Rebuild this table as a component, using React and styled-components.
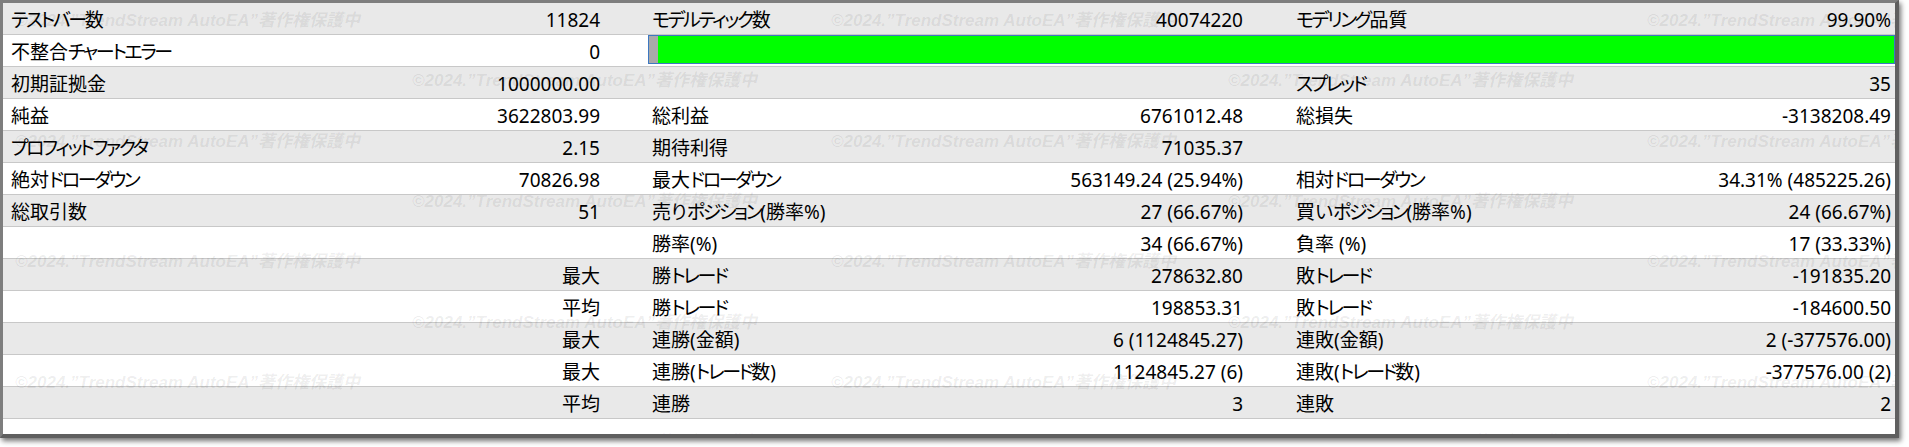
import React from "react";
import styled, { createGlobalStyle } from "styled-components";

const GlobalStyle = createGlobalStyle`
  html, body {
    margin: 0;
    padding: 0;
    background: #ffffff;
  }
  body {
    width: 1909px;
    height: 447px;
    overflow: hidden;
  }
`;

const rows = [
  [["テストバー数", "11824"], ["モデルティック数", "40074220"], ["モデリング品質", "99.90%"]],
  [["不整合チャートエラー", "0"], "bar"],
  [["初期証拠金", "1000000.00"], ["", ""], ["スプレッド", "35"]],
  [["純益", "3622803.99"], ["総利益", "6761012.48"], ["総損失", "-3138208.49"]],
  [["プロフィットファクタ", "2.15"], ["期待利得", "71035.37"], ["", ""]],
  [["絶対ドローダウン", "70826.98"], ["最大ドローダウン", "563149.24 (25.94%)"], ["相対ドローダウン", "34.31% (485225.26)"]],
  [["総取引数", "51"], ["売りポジション(勝率%)", "27 (66.67%)"], ["買いポジション(勝率%)", "24 (66.67%)"]],
  [["", ""], ["勝率(%)", "34 (66.67%)"], ["負率 (%)", "17 (33.33%)"]],
  [["", "最大"], ["勝トレード", "278632.80"], ["敗トレード", "-191835.20"]],
  [["", "平均"], ["勝トレード", "198853.31"], ["敗トレード", "-184600.50"]],
  [["", "最大"], ["連勝(金額)", "6 (1124845.27)"], ["連敗(金額)", "2 (-377576.00)"]],
  [["", "最大"], ["連勝(トレード数)", "1124845.27 (6)"], ["連敗(トレード数)", "-377576.00 (2)"]],
  [["", "平均"], ["連勝", "3"], ["連敗", "2"]],
];

// padding of each label/value group: [left, right]
const groupPads = [
  [8, 48],
  [4, 49],
  [4, 4],
];

const WATERMARK = "©2024.”TrendStream AutoEA”著作権保護中";

const Window = styled.div`
  position: relative;
  box-sizing: border-box;
  width: 1899px;
  height: 438px;
  border-style: solid;
  border-color: #7e7e7e #5f5f5f #5f5f5f #7e7e7e;
  border-width: 3px 4px 4px 3px;
  box-shadow: 2px 3px 5px rgba(0, 0, 0, 0.55);
  background: #ffffff;
  overflow: hidden;
  display: flex;
  flex-direction: column;
  font-family: "Noto Sans", "Noto Sans CJK JP", sans-serif;
  font-feature-settings: "palt";
  font-size: 19px;
  color: #000000;
`;

const Row = styled.div`
  box-sizing: border-box;
  height: 32px;
  display: grid;
  grid-template-columns: 645px 644px 1fr;
  background: ${(p) => (p.$shaded ? "#e9e9e9" : "#ffffff")};
  border-bottom: 1px solid #c8c8c8;
`;

const Group = styled.div`
  display: flex;
  align-items: center;
  justify-content: space-between;
  padding: 3px ${(p) => p.$pr}px 0 ${(p) => p.$pl}px;
  white-space: nowrap;
  line-height: 1;
`;

const Label = styled.span``;

// katakana in the source UI font is narrower than in Noto CJK
const Kana = styled.span`
  letter-spacing: -2.4px;
`;

const Value = styled.span`
  text-align: right;
`;

const Bar = styled.div`
  grid-column: 2 / 4;
  align-self: start;
  box-sizing: border-box;
  height: 29px;
  display: flex;
  border: 1px solid #3d78c2;
  background: #00ff00;
`;

const BarLead = styled.div`
  width: 9px;
  background: #a9a9a9;
`;

const Filler = styled.div`
  flex: 1;
  background: #ffffff;
`;

const MarkLayer = styled.div`
  position: absolute;
  inset: 0;
  pointer-events: none;
`;

const Mark = styled.span`
  position: absolute;
  white-space: nowrap;
  font-family: "Liberation Sans Narrow", "Liberation Sans", "Noto Sans CJK JP", sans-serif;
  font-feature-settings: normal;
  font-style: italic;
  font-weight: bold;
  font-size: 17px;
  line-height: 20px;
  color: rgba(0, 0, 0, 0.075);
`;

const splitKana = (text) =>
  text.split(/([\u30A0-\u30FF]+)/).map((part, i) =>
    /^[\u30A0-\u30FF]+$/.test(part) ? <Kana key={i}>{part}</Kana> : part
  );

const marks = [];
for (let k = 0; k < 8; k++) {
  const y = 21 + 60.3 * k - 3 - 10;
  const x0 = k % 2 === 0 ? 15 : 412;
  for (let j = 0; j < 3; j++) {
    marks.push({ x: x0 + 816 * j - 3, y });
  }
}

export default function App() {
  return (
    <>
      <GlobalStyle />
      <Window>
        {rows.map((cells, i) => (
          <Row key={i} $shaded={i % 2 === 0}>
            {cells.map((cell, c) =>
              cell === "bar" ? (
                <Bar key="bar">
                  <BarLead />
                </Bar>
              ) : (
                <Group key={c} $pl={groupPads[c][0]} $pr={groupPads[c][1]}>
                  <Label>{splitKana(cell[0])}</Label>
                  <Value>{cell[1]}</Value>
                </Group>
              )
            )}
          </Row>
        ))}
        <Filler />
        <MarkLayer>
          {marks.map((m, i) => (
            <Mark key={i} style={{ left: m.x, top: m.y }}>
              {WATERMARK}
            </Mark>
          ))}
        </MarkLayer>
      </Window>
    </>
  );
}
